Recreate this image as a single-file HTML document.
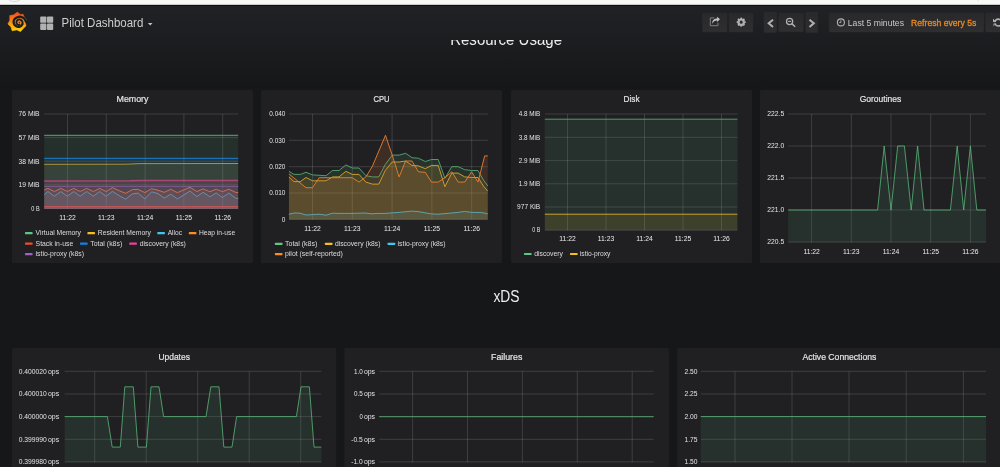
<!DOCTYPE html>
<html><head><meta charset="utf-8"><title>Pilot Dashboard</title>
<style>
html,body{margin:0;padding:0;background:#161719;overflow:hidden;}
svg{display:block;font-family:'Liberation Sans', sans-serif;filter:blur(0.35px);}
</style></head><body>
<svg width="1000" height="467" viewBox="0 0 1000 467">
<defs>
<linearGradient id="pg" x1="0" y1="0" x2="0" y2="1"><stop offset="0" stop-color="#202225"/><stop offset="1" stop-color="#161719"/></linearGradient>
<linearGradient id="lg" x1="0" y1="0" x2="0" y2="1"><stop offset="0" stop-color="#f44d1c"/><stop offset="0.5" stop-color="#fa8a12"/><stop offset="1" stop-color="#ffd80a"/></linearGradient>
<linearGradient id="bt" x1="0" y1="0" x2="0" y2="1"><stop offset="0" stop-color="#29292c"/><stop offset="1" stop-color="#2e2e31"/></linearGradient>
</defs>
<rect width="1000" height="467" fill="#161719"/>
<rect y="5" width="1000" height="80" fill="url(#pg)"/>

<clipPath id="cl"><rect x="0" y="40.0" width="1000" height="20"/></clipPath>
<text x="450.2" y="44.5" font-size="15.6" textLength="111.8" lengthAdjust="spacingAndGlyphs" fill="#eeeeee" clip-path="url(#cl)">Resource Usage</text>
<text x="493.4" y="302.1" font-size="15.6" textLength="26.2" lengthAdjust="spacingAndGlyphs" fill="#eeeeee">xDS</text>
<rect y="-2" width="1000" height="6.9" fill="#f8f8f6"/>
<rect y="4.9" width="1000" height="1.0" fill="#0e0f11"/>
<rect x="977.6" y="0" width="0.9" height="1.7" fill="#e2e2e2"/>
<ellipse cx="14.5" cy="-2" rx="6" ry="3.6" fill="none" stroke="#dcdcdc" stroke-width="1.2"/>
<path d="M17.35,12.1 L20.3,14.4 L23.1,14.2 L24.0,16.5 L26.2,19.4 L25.4,22.6 L26.0,25.9 L23.6,28.2 L20.6,31.6 L16.7,29.9 L12.1,30.8 L11.0,27.1 L7.9,23.9 L9.8,20.2 L9.7,15.6 L13.7,14.8 Z" fill="url(#lg)" stroke="url(#lg)" stroke-width="0.5" stroke-linejoin="round"/>
<path d="M26.60,22.40 C26.43,22.17 25.89,21.50 25.60,21.00 C25.31,20.50 25.27,19.95 24.85,19.40 C24.43,18.85 23.74,18.12 23.10,17.70 C22.46,17.27 21.71,17.00 21.00,16.85 C20.29,16.70 19.63,16.66 18.85,16.80 C18.07,16.94 17.05,17.27 16.30,17.70 C15.55,18.13 14.80,18.72 14.35,19.40 C13.90,20.08 13.64,21.05 13.60,21.80 C13.56,22.55 13.80,23.27 14.10,23.90 C14.40,24.53 14.86,25.15 15.40,25.60 C15.94,26.05 16.70,26.40 17.35,26.60 C18.00,26.80 18.66,26.93 19.30,26.80 C19.94,26.68 20.68,26.30 21.20,25.85 C21.72,25.40 22.20,24.39 22.40,24.10" fill="none" stroke="#1d1e21" stroke-width="2.3" stroke-linecap="round"/>
<path d="M22.40,24.10 C22.43,23.85 22.65,23.10 22.60,22.60 C22.55,22.10 22.37,21.52 22.10,21.10 C21.83,20.68 21.43,20.38 21.00,20.10 C20.57,19.82 20.00,19.45 19.50,19.40 C19.00,19.35 18.45,19.55 18.00,19.80 C17.55,20.05 17.07,20.47 16.80,20.90 C16.53,21.33 16.38,21.90 16.40,22.40 C16.42,22.90 16.60,23.48 16.90,23.90 C17.20,24.32 17.75,24.75 18.20,24.90 C18.65,25.05 19.37,24.82 19.60,24.80" fill="none" stroke="#1d1e21" stroke-width="1.9" stroke-linecap="round"/>
<circle cx="19.4" cy="22.6" r="0.9" fill="#1d1e21" fill-opacity="0.85"/>
<rect x="40.2" y="16.4" width="6.2" height="6.4" rx="0.9" fill="#b2b2b3"/>
<rect x="47.0" y="16.4" width="6.2" height="6.4" rx="0.9" fill="#b2b2b3"/>
<rect x="40.2" y="23.5" width="6.2" height="6.4" rx="0.9" fill="#b2b2b3"/>
<rect x="47.0" y="23.5" width="6.2" height="6.4" rx="0.9" fill="#b2b2b3"/>
<text x="61.6" y="26.7" font-size="12.4" textLength="81.7" lengthAdjust="spacingAndGlyphs" fill="#cdcdce">Pilot Dashboard</text>
<path d="M147.9,22.9 L152.5,22.9 L150.2,25.5 Z" fill="#c8c8c9"/>
<rect x="702.4" y="13.2" width="24.600000000000023" height="18.8" rx="0.8" fill="url(#bt)" stroke="#2f2f32" stroke-width="0.5"/>
<rect x="729.1" y="13.2" width="23.799999999999955" height="18.8" rx="0.8" fill="url(#bt)" stroke="#2f2f32" stroke-width="0.5"/>
<rect x="764" y="12.3" width="12.600000000000023" height="20.3" rx="0.8" fill="url(#bt)" stroke="#2f2f32" stroke-width="0.5"/>
<rect x="778.7" y="13.3" width="24.699999999999932" height="18.4" rx="0.8" fill="url(#bt)" stroke="#2f2f32" stroke-width="0.5"/>
<rect x="805.7" y="12.3" width="12.0" height="20.3" rx="0.8" fill="url(#bt)" stroke="#2f2f32" stroke-width="0.5"/>
<rect x="829.2" y="13.1" width="154.5999999999999" height="18.799999999999997" rx="0.8" fill="url(#bt)" stroke="#2f2f32" stroke-width="0.5"/>
<rect x="985.6" y="13.1" width="18.399999999999977" height="18.799999999999997" rx="0.8" fill="url(#bt)" stroke="#2f2f32" stroke-width="0.5"/>
<path d="M714.4,17.9 H710.3 V25.7 H718 V22.8" fill="none" stroke="#858587" stroke-width="0.95"/>
<path d="M712.2,23.8 C712.0,20.4 713.9,18.5 717.0,18.4 V16.7 L720,19.3 L717.0,21.9 V20.4 C714.8,20.4 713.4,21.4 712.2,23.8 Z" fill="#c2c2c3"/>
<g transform="translate(741.2,22.15)"><circle r="2.65" fill="none" stroke="#b0b0b1" stroke-width="2.2"/><rect x="-0.85" y="-4.5" width="1.7" height="1.6" fill="#b0b0b1" transform="rotate(0)"/><rect x="-0.85" y="-4.5" width="1.7" height="1.6" fill="#b0b0b1" transform="rotate(45)"/><rect x="-0.85" y="-4.5" width="1.7" height="1.6" fill="#b0b0b1" transform="rotate(90)"/><rect x="-0.85" y="-4.5" width="1.7" height="1.6" fill="#b0b0b1" transform="rotate(135)"/><rect x="-0.85" y="-4.5" width="1.7" height="1.6" fill="#b0b0b1" transform="rotate(180)"/><rect x="-0.85" y="-4.5" width="1.7" height="1.6" fill="#b0b0b1" transform="rotate(225)"/><rect x="-0.85" y="-4.5" width="1.7" height="1.6" fill="#b0b0b1" transform="rotate(270)"/><rect x="-0.85" y="-4.5" width="1.7" height="1.6" fill="#b0b0b1" transform="rotate(315)"/></g>
<path d="M773.0,19.7 L768.7,23.3 L773.0,26.9" fill="none" stroke="#b0b0b1" stroke-width="2.0"/>
<path d="M809.5,19.7 L813.8,23.3 L809.5,26.9" fill="none" stroke="#b0b0b1" stroke-width="2.0"/>
<g fill="none" stroke="#b0b0b1"><circle cx="789.6" cy="21.4" r="3.1" stroke-width="1.25"/><path d="M792.0,23.9 L795.2,26.7" stroke-width="1.5"/><path d="M788.0,21.4 H791.2" stroke-width="1"/></g>
<g fill="none" stroke="#b0b0b1"><circle cx="840.9" cy="22.4" r="3.5" stroke-width="1.1"/><path d="M840.9,20.2 V22.6 H839.2" stroke-width="0.9"/></g>
<text x="847.8" y="26" font-size="9.1" textLength="56.2" lengthAdjust="spacingAndGlyphs" fill="#c9c9ca">Last 5 minutes</text>
<text x="911.1" y="26" font-size="9.1" textLength="65.2" lengthAdjust="spacingAndGlyphs" fill="#ee8c1c" stroke="#ee8c1c" stroke-width="0.3">Refresh every 5s</text>
<circle cx="998.3" cy="22.6" r="3.4" fill="none" stroke="#b0b0b1" stroke-width="1.7"/>
<rect x="992" y="22.1" width="5" height="1.3" fill="#2c2c2f"/>
<path d="M993,18.6 V22 H996.2 Z" fill="#b0b0b1"/>
<path d="M993.2,23.5 H996.4 L993.2,26.6 Z" fill="#b0b0b1" fill-opacity="0.6"/>
<rect x="12" y="90" width="241" height="173.0" rx="1.6" fill="#202023"/>
<text x="132.5" y="101.5" font-size="9.4" text-anchor="middle" textLength="32" lengthAdjust="spacingAndGlyphs" fill="#e4e4e5" stroke="#e4e4e5" stroke-width="0.2">Memory</text>
<line x1="44.2" x2="238.2" y1="114" y2="114" stroke="rgba(215,215,220,0.16)" stroke-width="1"/>
<line x1="44.2" x2="238.2" y1="137.6" y2="137.6" stroke="rgba(215,215,220,0.16)" stroke-width="1"/>
<line x1="44.2" x2="238.2" y1="161.2" y2="161.2" stroke="rgba(215,215,220,0.16)" stroke-width="1"/>
<line x1="44.2" x2="238.2" y1="184.9" y2="184.9" stroke="rgba(215,215,220,0.16)" stroke-width="1"/>
<line x1="44.2" x2="238.2" y1="208.5" y2="208.5" stroke="rgba(215,215,220,0.16)" stroke-width="1"/>
<line x1="67.5" x2="67.5" y1="114" y2="209" stroke="rgba(215,215,220,0.16)" stroke-width="1"/>
<line x1="106.3" x2="106.3" y1="114" y2="209" stroke="rgba(215,215,220,0.16)" stroke-width="1"/>
<line x1="145.1" x2="145.1" y1="114" y2="209" stroke="rgba(215,215,220,0.16)" stroke-width="1"/>
<line x1="183.9" x2="183.9" y1="114" y2="209" stroke="rgba(215,215,220,0.16)" stroke-width="1"/>
<line x1="222.7" x2="222.7" y1="114" y2="209" stroke="rgba(215,215,220,0.16)" stroke-width="1"/>
<polygon points="44.2,135.3 238.2,135.3 238.2,209.0 44.2,209.0" fill="#5ab87a" fill-opacity="0.1"/>
<polyline points="44.2,135.3 238.2,135.3" fill="none" stroke="#5ab87a" stroke-width="1.0" stroke-opacity="0.9" stroke-linejoin="round"/>
<polygon points="44.2,164.3 125.0,164.2 140.0,163.6 238.2,163.5 238.2,209.0 44.2,209.0" fill="#e8b62c" fill-opacity="0.1"/>
<polyline points="44.2,164.3 125.0,164.2 140.0,163.6 238.2,163.5" fill="none" stroke="#e8b62c" stroke-width="1.0" stroke-opacity="0.75" stroke-linejoin="round"/>
<polygon points="44.2,194.7 47.9,191.5 54.4,196.2 60.8,191.5 67.4,196.2 73.6,191.5 80.2,196.2 86.7,191.5 93.3,196.2 99.6,191.5 106.2,196.2 112.4,191.3 119.0,195.6 125.6,199.2 132.4,193.9 138.2,193.1 144.8,198.9 151.6,191.8 158.0,193.6 164.2,198.1 170.8,194.2 177.4,198.9 190.0,191.0 196.8,196.6 203.1,192.3 209.9,196.8 216.2,192.9 222.5,197.5 228.8,193.1 235.6,198.1 238.2,198.4 238.2,209.0 44.2,209.0" fill="#45c0e6" fill-opacity="0.13"/>
<polyline points="44.2,194.7 47.9,191.5 54.4,196.2 60.8,191.5 67.4,196.2 73.6,191.5 80.2,196.2 86.7,191.5 93.3,196.2 99.6,191.5 106.2,196.2 112.4,191.3 119.0,195.6 125.6,199.2 132.4,193.9 138.2,193.1 144.8,198.9 151.6,191.8 158.0,193.6 164.2,198.1 170.8,194.2 177.4,198.9 190.0,191.0 196.8,196.6 203.1,192.3 209.9,196.8 216.2,192.9 222.5,197.5 228.8,193.1 235.6,198.1 238.2,198.4" fill="none" stroke="#45c0e6" stroke-width="1.0" stroke-opacity="0.8" stroke-linejoin="round"/>
<polygon points="44.2,190.0 47.9,188.4 54.4,191.5 60.8,188.4 67.4,191.5 73.6,188.4 80.2,191.5 86.7,188.4 93.3,191.5 99.6,188.4 106.2,191.5 112.4,187.6 119.0,190.6 125.6,193.3 132.4,189.6 138.2,189.4 144.8,192.6 151.6,188.7 158.0,190.3 164.2,192.3 170.8,189.4 177.4,192.6 190.0,187.3 196.8,191.5 203.1,188.9 209.9,191.7 216.2,189.2 222.5,191.7 228.8,189.2 235.6,192.4 238.2,192.6 238.2,209.0 44.2,209.0" fill="#f08030" fill-opacity="0.13"/>
<polyline points="44.2,190.0 47.9,188.4 54.4,191.5 60.8,188.4 67.4,191.5 73.6,188.4 80.2,191.5 86.7,188.4 93.3,191.5 99.6,188.4 106.2,191.5 112.4,187.6 119.0,190.6 125.6,193.3 132.4,189.6 138.2,189.4 144.8,192.6 151.6,188.7 158.0,190.3 164.2,192.3 170.8,189.4 177.4,192.6 190.0,187.3 196.8,191.5 203.1,188.9 209.9,191.7 216.2,189.2 222.5,191.7 228.8,189.2 235.6,192.4 238.2,192.6" fill="none" stroke="#f08030" stroke-width="1.0" stroke-opacity="0.9" stroke-linejoin="round"/>
<polygon points="44.2,206.8 238.2,206.8 238.2,209.0 44.2,209.0" fill="#e8512c" fill-opacity="0.13"/>
<polyline points="44.2,206.8 238.2,206.8" fill="none" stroke="#e8512c" stroke-width="1.4" stroke-opacity="0.85" stroke-linejoin="round"/>
<polygon points="44.2,158.4 238.2,158.4 238.2,209.0 44.2,209.0" fill="#1a7fd8" fill-opacity="0.1"/>
<polyline points="44.2,158.4 238.2,158.4" fill="none" stroke="#1a7fd8" stroke-width="1.2" stroke-opacity="0.8" stroke-linejoin="round"/>
<polygon points="44.2,180.9 130.0,180.8 142.0,180.5 238.2,180.5 238.2,209.0 44.2,209.0" fill="#d8468f" fill-opacity="0.13"/>
<polyline points="44.2,180.9 130.0,180.8 142.0,180.5 238.2,180.5" fill="none" stroke="#d8468f" stroke-width="1.5" stroke-opacity="0.72" stroke-linejoin="round"/>
<polygon points="44.2,186.4 238.2,186.4 238.2,209.0 44.2,209.0" fill="#8f62b4" fill-opacity="0.13"/>
<polyline points="44.2,186.4 238.2,186.4" fill="none" stroke="#8f62b4" stroke-width="1.0" stroke-opacity="0.7" stroke-linejoin="round"/>
<text x="39.6" y="115.8" font-size="7" text-anchor="end" textLength="21" lengthAdjust="spacingAndGlyphs" fill="#e4e4e5">76 MiB</text>
<text x="39.6" y="139.9" font-size="7" text-anchor="end" textLength="21" lengthAdjust="spacingAndGlyphs" fill="#e4e4e5">57 MiB</text>
<text x="39.6" y="163.5" font-size="7" text-anchor="end" textLength="21" lengthAdjust="spacingAndGlyphs" fill="#e4e4e5">38 MiB</text>
<text x="39.6" y="187.20000000000002" font-size="7" text-anchor="end" textLength="21" lengthAdjust="spacingAndGlyphs" fill="#e4e4e5">19 MiB</text>
<text x="39.6" y="210.8" font-size="7" text-anchor="end" textLength="8.3" lengthAdjust="spacingAndGlyphs" fill="#e4e4e5">0 B</text>
<text x="67.5" y="220" font-size="7" text-anchor="middle" textLength="16.4" lengthAdjust="spacingAndGlyphs" fill="#ededee">11:22</text>
<text x="106.3" y="220" font-size="7" text-anchor="middle" textLength="16.4" lengthAdjust="spacingAndGlyphs" fill="#ededee">11:23</text>
<text x="145.1" y="220" font-size="7" text-anchor="middle" textLength="16.4" lengthAdjust="spacingAndGlyphs" fill="#ededee">11:24</text>
<text x="183.9" y="220" font-size="7" text-anchor="middle" textLength="16.4" lengthAdjust="spacingAndGlyphs" fill="#ededee">11:25</text>
<text x="222.7" y="220" font-size="7" text-anchor="middle" textLength="16.4" lengthAdjust="spacingAndGlyphs" fill="#ededee">11:26</text>
<rect x="25" y="232.1" width="7.6" height="2.2" rx="0.6" fill="#5cc880"/>
<text x="35.6" y="235.1" font-size="7.3" textLength="45.4" lengthAdjust="spacingAndGlyphs" fill="#dcdcdd">Virtual Memory</text>
<rect x="87.4" y="232.1" width="7.6" height="2.2" rx="0.6" fill="#f4be20"/>
<text x="97.8" y="235.1" font-size="7.3" textLength="53" lengthAdjust="spacingAndGlyphs" fill="#dcdcdd">Resident Memory</text>
<rect x="157.3" y="232.1" width="7.6" height="2.2" rx="0.6" fill="#3ec8f0"/>
<text x="167.7" y="235.1" font-size="7.3" textLength="14.3" lengthAdjust="spacingAndGlyphs" fill="#dcdcdd">Alloc</text>
<rect x="188.8" y="232.1" width="7.6" height="2.2" rx="0.6" fill="#ff8c1e"/>
<text x="198.9" y="235.1" font-size="7.3" textLength="36.3" lengthAdjust="spacingAndGlyphs" fill="#dcdcdd">Heap in-use</text>
<rect x="25" y="242.6" width="7.6" height="2.2" rx="0.6" fill="#f24c20"/>
<text x="35.6" y="245.6" font-size="7.3" textLength="37.6" lengthAdjust="spacingAndGlyphs" fill="#dcdcdd">Stack in-use</text>
<rect x="80" y="242.6" width="7.6" height="2.2" rx="0.6" fill="#1082e8"/>
<text x="90.3" y="245.6" font-size="7.3" textLength="31.9" lengthAdjust="spacingAndGlyphs" fill="#dcdcdd">Total (k8s)</text>
<rect x="129.3" y="242.6" width="7.6" height="2.2" rx="0.6" fill="#ec4099"/>
<text x="139.7" y="245.6" font-size="7.3" textLength="46.2" lengthAdjust="spacingAndGlyphs" fill="#dcdcdd">discovery (k8s)</text>
<rect x="25" y="253.1" width="7.6" height="2.2" rx="0.6" fill="#9c62c4"/>
<text x="35.6" y="256.09999999999997" font-size="7.3" textLength="48.4" lengthAdjust="spacingAndGlyphs" fill="#dcdcdd">istio-proxy (k8s)</text>
<rect x="261" y="90" width="241" height="173.0" rx="1.6" fill="#202023"/>
<text x="381.5" y="101.5" font-size="9.4" text-anchor="middle" textLength="16.1" lengthAdjust="spacingAndGlyphs" fill="#e4e4e5" stroke="#e4e4e5" stroke-width="0.2">CPU</text>
<line x1="289" x2="487.8" y1="114" y2="114" stroke="rgba(215,215,220,0.16)" stroke-width="1"/>
<line x1="289" x2="487.8" y1="140.3" y2="140.3" stroke="rgba(215,215,220,0.16)" stroke-width="1"/>
<line x1="289" x2="487.8" y1="166.7" y2="166.7" stroke="rgba(215,215,220,0.16)" stroke-width="1"/>
<line x1="289" x2="487.8" y1="193" y2="193" stroke="rgba(215,215,220,0.16)" stroke-width="1"/>
<line x1="289" x2="487.8" y1="219.3" y2="219.3" stroke="rgba(215,215,220,0.16)" stroke-width="1"/>
<line x1="312.5" x2="312.5" y1="114" y2="219.6" stroke="rgba(215,215,220,0.16)" stroke-width="1"/>
<line x1="352.3" x2="352.3" y1="114" y2="219.6" stroke="rgba(215,215,220,0.16)" stroke-width="1"/>
<line x1="392.1" x2="392.1" y1="114" y2="219.6" stroke="rgba(215,215,220,0.16)" stroke-width="1"/>
<line x1="431.9" x2="431.9" y1="114" y2="219.6" stroke="rgba(215,215,220,0.16)" stroke-width="1"/>
<line x1="471.7" x2="471.7" y1="114" y2="219.6" stroke="rgba(215,215,220,0.16)" stroke-width="1"/>
<polygon points="288.9,171.3 294.0,174.4 300.4,174.4 306.0,172.3 312.5,174.9 326.1,175.7 332.5,170.5 339.0,170.5 345.9,164.9 352.3,168.0 359.0,168.0 365.9,175.7 372.4,176.9 378.8,176.9 385.2,164.6 392.2,155.1 399.1,155.1 405.6,153.3 412.0,157.7 418.4,158.2 425.3,161.5 431.5,159.5 438.2,159.5 444.9,178.2 451.8,166.7 458.2,166.7 464.7,169.7 471.6,170.5 478.0,170.5 483.9,180.8 487.8,185.9 487.8,219.6 288.9,219.6" fill="#5ab87a" fill-opacity="0.12"/>
<polyline points="288.9,171.3 294.0,174.4 300.4,174.4 306.0,172.3 312.5,174.9 326.1,175.7 332.5,170.5 339.0,170.5 345.9,164.9 352.3,168.0 359.0,168.0 365.9,175.7 372.4,176.9 378.8,176.9 385.2,164.6 392.2,155.1 399.1,155.1 405.6,153.3 412.0,157.7 418.4,158.2 425.3,161.5 431.5,159.5 438.2,159.5 444.9,178.2 451.8,166.7 458.2,166.7 464.7,169.7 471.6,170.5 478.0,170.5 483.9,180.8 487.8,185.9" fill="none" stroke="#5ab87a" stroke-width="0.95" stroke-opacity="0.85" stroke-linejoin="round"/>
<polygon points="288.9,176.9 294.0,181.6 300.4,181.6 306.0,177.5 312.5,180.8 326.1,180.8 332.5,176.9 339.0,176.9 345.9,171.3 352.3,174.4 359.0,174.4 365.9,182.1 372.4,184.1 378.8,184.1 385.2,170.5 392.2,162.0 399.1,162.0 405.6,161.0 412.0,165.4 418.4,165.9 425.3,168.7 431.5,165.4 438.2,165.4 444.9,186.7 451.8,173.1 458.2,173.1 464.7,176.9 471.6,177.5 478.0,177.5 483.9,186.7 487.8,191.1 487.8,219.6 288.9,219.6" fill="#e8b62c" fill-opacity="0.14"/>
<polyline points="288.9,176.9 294.0,181.6 300.4,181.6 306.0,177.5 312.5,180.8 326.1,180.8 332.5,176.9 339.0,176.9 345.9,171.3 352.3,174.4 359.0,174.4 365.9,182.1 372.4,184.1 378.8,184.1 385.2,170.5 392.2,162.0 399.1,162.0 405.6,161.0 412.0,165.4 418.4,165.9 425.3,168.7 431.5,165.4 438.2,165.4 444.9,186.7 451.8,173.1 458.2,173.1 464.7,176.9 471.6,177.5 478.0,177.5 483.9,186.7 487.8,191.1" fill="none" stroke="#e8b62c" stroke-width="0.95" stroke-opacity="0.85" stroke-linejoin="round"/>
<polygon points="288.9,214.2 295.0,212.9 300.0,213.2 306.0,215.0 312.5,214.6 319.0,214.2 326.0,215.2 332.5,213.2 339.0,213.4 352.0,213.4 365.0,213.0 372.0,213.8 378.0,213.4 385.0,213.4 399.0,212.4 412.0,211.1 418.4,211.6 425.0,212.8 431.5,213.9 438.0,214.2 445.0,213.6 458.0,212.4 464.7,211.4 471.6,212.4 478.0,212.4 484.0,212.9 487.8,213.9 487.8,219.6 288.9,219.6" fill="#45c0e6" fill-opacity="0.12"/>
<polyline points="288.9,214.2 295.0,212.9 300.0,213.2 306.0,215.0 312.5,214.6 319.0,214.2 326.0,215.2 332.5,213.2 339.0,213.4 352.0,213.4 365.0,213.0 372.0,213.8 378.0,213.4 385.0,213.4 399.0,212.4 412.0,211.1 418.4,211.6 425.0,212.8 431.5,213.9 438.0,214.2 445.0,213.6 458.0,212.4 464.7,211.4 471.6,212.4 478.0,212.4 484.0,212.9 487.8,213.9" fill="none" stroke="#45c0e6" stroke-width="0.95" stroke-opacity="0.85" stroke-linejoin="round"/>
<polygon points="288.9,173.9 306.0,187.7 312.5,187.7 319.2,177.7 352.3,177.7 359.0,182.1 365.9,176.9 372.4,166.2 385.5,135.3 392.2,155.1 399.1,176.9 405.6,161.0 412.0,161.0 418.4,171.8 425.3,172.3 431.5,182.1 438.2,182.1 444.9,177.7 451.8,171.8 458.2,182.1 464.7,182.1 471.6,171.8 478.0,182.1 484.7,155.9 487.8,155.9 487.8,219.6 288.9,219.6" fill="#f08030" fill-opacity="0.14"/>
<polyline points="288.9,173.9 306.0,187.7 312.5,187.7 319.2,177.7 352.3,177.7 359.0,182.1 365.9,176.9 372.4,166.2 385.5,135.3 392.2,155.1 399.1,176.9 405.6,161.0 412.0,161.0 418.4,171.8 425.3,172.3 431.5,182.1 438.2,182.1 444.9,177.7 451.8,171.8 458.2,182.1 464.7,182.1 471.6,171.8 478.0,182.1 484.7,155.9 487.8,155.9" fill="none" stroke="#f08030" stroke-width="0.95" stroke-opacity="0.92" stroke-linejoin="round"/>
<text x="285.4" y="115.8" font-size="7" text-anchor="end" textLength="16.1" lengthAdjust="spacingAndGlyphs" fill="#e4e4e5">0.040</text>
<text x="285.4" y="142.60000000000002" font-size="7" text-anchor="end" textLength="16.1" lengthAdjust="spacingAndGlyphs" fill="#e4e4e5">0.030</text>
<text x="285.4" y="169.0" font-size="7" text-anchor="end" textLength="16.1" lengthAdjust="spacingAndGlyphs" fill="#e4e4e5">0.020</text>
<text x="285.4" y="195.3" font-size="7" text-anchor="end" textLength="16.1" lengthAdjust="spacingAndGlyphs" fill="#e4e4e5">0.010</text>
<text x="285.4" y="221.60000000000002" font-size="7" text-anchor="end" textLength="3.6" lengthAdjust="spacingAndGlyphs" fill="#e4e4e5">0</text>
<text x="312.5" y="230.6" font-size="7" text-anchor="middle" textLength="16.4" lengthAdjust="spacingAndGlyphs" fill="#ededee">11:22</text>
<text x="352.3" y="230.6" font-size="7" text-anchor="middle" textLength="16.4" lengthAdjust="spacingAndGlyphs" fill="#ededee">11:23</text>
<text x="392.1" y="230.6" font-size="7" text-anchor="middle" textLength="16.4" lengthAdjust="spacingAndGlyphs" fill="#ededee">11:24</text>
<text x="431.9" y="230.6" font-size="7" text-anchor="middle" textLength="16.4" lengthAdjust="spacingAndGlyphs" fill="#ededee">11:25</text>
<text x="471.7" y="230.6" font-size="7" text-anchor="middle" textLength="16.4" lengthAdjust="spacingAndGlyphs" fill="#ededee">11:26</text>
<rect x="274.9" y="242.70000000000002" width="7.6" height="2.2" rx="0.6" fill="#5cc880"/>
<text x="285" y="245.70000000000002" font-size="7.3" textLength="32.3" lengthAdjust="spacingAndGlyphs" fill="#dcdcdd">Total (k8s)</text>
<rect x="324.9" y="242.70000000000002" width="7.6" height="2.2" rx="0.6" fill="#f4be20"/>
<text x="334.9" y="245.70000000000002" font-size="7.3" textLength="45.6" lengthAdjust="spacingAndGlyphs" fill="#dcdcdd">discovery (k8s)</text>
<rect x="387.6" y="242.70000000000002" width="7.6" height="2.2" rx="0.6" fill="#3ec8f0"/>
<text x="397.6" y="245.70000000000002" font-size="7.3" textLength="47.9" lengthAdjust="spacingAndGlyphs" fill="#dcdcdd">istio-proxy (k8s)</text>
<rect x="274.9" y="253.0" width="7.6" height="2.2" rx="0.6" fill="#ff8c1e"/>
<text x="285" y="256.0" font-size="7.3" textLength="57.9" lengthAdjust="spacingAndGlyphs" fill="#dcdcdd">pilot (self-reported)</text>
<rect x="511" y="90" width="241" height="173.0" rx="1.6" fill="#202023"/>
<text x="631.5" y="101.5" font-size="9.4" text-anchor="middle" textLength="16" lengthAdjust="spacingAndGlyphs" fill="#e4e4e5" stroke="#e4e4e5" stroke-width="0.2">Disk</text>
<line x1="544.8" x2="737.4" y1="114" y2="114" stroke="rgba(215,215,220,0.16)" stroke-width="1"/>
<line x1="544.8" x2="737.4" y1="137.3" y2="137.3" stroke="rgba(215,215,220,0.16)" stroke-width="1"/>
<line x1="544.8" x2="737.4" y1="160.6" y2="160.6" stroke="rgba(215,215,220,0.16)" stroke-width="1"/>
<line x1="544.8" x2="737.4" y1="183.8" y2="183.8" stroke="rgba(215,215,220,0.16)" stroke-width="1"/>
<line x1="544.8" x2="737.4" y1="207.0" y2="207.0" stroke="rgba(215,215,220,0.16)" stroke-width="1"/>
<line x1="544.8" x2="737.4" y1="230.2" y2="230.2" stroke="rgba(215,215,220,0.16)" stroke-width="1"/>
<line x1="567.5" x2="567.5" y1="114" y2="230.3" stroke="rgba(215,215,220,0.16)" stroke-width="1"/>
<line x1="606" x2="606" y1="114" y2="230.3" stroke="rgba(215,215,220,0.16)" stroke-width="1"/>
<line x1="644.5" x2="644.5" y1="114" y2="230.3" stroke="rgba(215,215,220,0.16)" stroke-width="1"/>
<line x1="683" x2="683" y1="114" y2="230.3" stroke="rgba(215,215,220,0.16)" stroke-width="1"/>
<line x1="721.5" x2="721.5" y1="114" y2="230.3" stroke="rgba(215,215,220,0.16)" stroke-width="1"/>
<polygon points="544.8,119.2 737.4,119.2 737.4,230.3 544.8,230.3" fill="#5ab87a" fill-opacity="0.11"/>
<polyline points="544.8,119.2 737.4,119.2" fill="none" stroke="#5ab87a" stroke-width="1.0" stroke-opacity="0.8" stroke-linejoin="round"/>
<polygon points="544.8,214.2 737.4,214.2 737.4,230.3 544.8,230.3" fill="#e8b62c" fill-opacity="0.12"/>
<polyline points="544.8,214.2 737.4,214.2" fill="none" stroke="#e8b62c" stroke-width="1.0" stroke-opacity="0.85" stroke-linejoin="round"/>
<text x="540.2" y="115.8" font-size="7" text-anchor="end" textLength="21.4" lengthAdjust="spacingAndGlyphs" fill="#e4e4e5">4.8 MiB</text>
<text x="540.2" y="139.5" font-size="7" text-anchor="end" textLength="21.4" lengthAdjust="spacingAndGlyphs" fill="#e4e4e5">3.8 MiB</text>
<text x="540.2" y="162.70000000000002" font-size="7" text-anchor="end" textLength="21.4" lengthAdjust="spacingAndGlyphs" fill="#e4e4e5">2.9 MiB</text>
<text x="540.2" y="185.9" font-size="7" text-anchor="end" textLength="21.4" lengthAdjust="spacingAndGlyphs" fill="#e4e4e5">1.9 MiB</text>
<text x="540.2" y="209.10000000000002" font-size="7" text-anchor="end" textLength="23.1" lengthAdjust="spacingAndGlyphs" fill="#e4e4e5">977 KiB</text>
<text x="540.2" y="231.9" font-size="7" text-anchor="end" textLength="8.0" lengthAdjust="spacingAndGlyphs" fill="#e4e4e5">0 B</text>
<text x="567.5" y="241" font-size="7" text-anchor="middle" textLength="16.4" lengthAdjust="spacingAndGlyphs" fill="#ededee">11:22</text>
<text x="606" y="241" font-size="7" text-anchor="middle" textLength="16.4" lengthAdjust="spacingAndGlyphs" fill="#ededee">11:23</text>
<text x="644.5" y="241" font-size="7" text-anchor="middle" textLength="16.4" lengthAdjust="spacingAndGlyphs" fill="#ededee">11:24</text>
<text x="683" y="241" font-size="7" text-anchor="middle" textLength="16.4" lengthAdjust="spacingAndGlyphs" fill="#ededee">11:25</text>
<text x="721.5" y="241" font-size="7" text-anchor="middle" textLength="16.4" lengthAdjust="spacingAndGlyphs" fill="#ededee">11:26</text>
<rect x="524" y="252.9" width="7.6" height="2.2" rx="0.6" fill="#5cc880"/>
<text x="534.2" y="255.9" font-size="7.3" textLength="28.8" lengthAdjust="spacingAndGlyphs" fill="#dcdcdd">discovery</text>
<rect x="570" y="252.9" width="7.6" height="2.2" rx="0.6" fill="#f4be20"/>
<text x="579.8" y="255.9" font-size="7.3" textLength="30.6" lengthAdjust="spacingAndGlyphs" fill="#dcdcdd">istio-proxy</text>
<rect x="760" y="90" width="241" height="173.0" rx="1.6" fill="#202023"/>
<text x="880.5" y="101.5" font-size="9.4" text-anchor="middle" textLength="41.6" lengthAdjust="spacingAndGlyphs" fill="#e4e4e5" stroke="#e4e4e5" stroke-width="0.2">Goroutines</text>
<line x1="788.2" x2="986" y1="114" y2="114" stroke="rgba(215,215,220,0.16)" stroke-width="1"/>
<line x1="788.2" x2="986" y1="146" y2="146" stroke="rgba(215,215,220,0.16)" stroke-width="1"/>
<line x1="788.2" x2="986" y1="178" y2="178" stroke="rgba(215,215,220,0.16)" stroke-width="1"/>
<line x1="788.2" x2="986" y1="210" y2="210" stroke="rgba(215,215,220,0.16)" stroke-width="1"/>
<line x1="788.2" x2="986" y1="242" y2="242" stroke="rgba(215,215,220,0.16)" stroke-width="1"/>
<line x1="811.6" x2="811.6" y1="114" y2="242.6" stroke="rgba(215,215,220,0.16)" stroke-width="1"/>
<line x1="851.3" x2="851.3" y1="114" y2="242.6" stroke="rgba(215,215,220,0.16)" stroke-width="1"/>
<line x1="891.0" x2="891.0" y1="114" y2="242.6" stroke="rgba(215,215,220,0.16)" stroke-width="1"/>
<line x1="930.7" x2="930.7" y1="114" y2="242.6" stroke="rgba(215,215,220,0.16)" stroke-width="1"/>
<line x1="970.4" x2="970.4" y1="114" y2="242.6" stroke="rgba(215,215,220,0.16)" stroke-width="1"/>
<polygon points="788.2,210.0 877.6,210.0 884.2,146.0 891.0,210.0 897.7,146.0 904.4,146.0 911.2,210.0 917.6,146.0 924.0,210.0 950.4,210.0 957.2,146.0 963.7,210.0 970.4,146.0 976.8,210.0 986.0,210.0 986.0,242.6 788.2,242.6" fill="#5ab87a" fill-opacity="0.11"/>
<polyline points="788.2,210.0 877.6,210.0 884.2,146.0 891.0,210.0 897.7,146.0 904.4,146.0 911.2,210.0 917.6,146.0 924.0,210.0 950.4,210.0 957.2,146.0 963.7,210.0 970.4,146.0 976.8,210.0 986.0,210.0" fill="none" stroke="#5ab87a" stroke-width="1.0" stroke-opacity="0.78" stroke-linejoin="round"/>
<text x="784.2" y="115.8" font-size="7" text-anchor="end" textLength="16.9" lengthAdjust="spacingAndGlyphs" fill="#e4e4e5">222.5</text>
<text x="784.2" y="148.3" font-size="7" text-anchor="end" textLength="16.9" lengthAdjust="spacingAndGlyphs" fill="#e4e4e5">222.0</text>
<text x="784.2" y="180.3" font-size="7" text-anchor="end" textLength="16.9" lengthAdjust="spacingAndGlyphs" fill="#e4e4e5">221.5</text>
<text x="784.2" y="212.3" font-size="7" text-anchor="end" textLength="16.9" lengthAdjust="spacingAndGlyphs" fill="#e4e4e5">221.0</text>
<text x="784.2" y="244.3" font-size="7" text-anchor="end" textLength="16.9" lengthAdjust="spacingAndGlyphs" fill="#e4e4e5">220.5</text>
<text x="811.6" y="253.6" font-size="7" text-anchor="middle" textLength="16.4" lengthAdjust="spacingAndGlyphs" fill="#ededee">11:22</text>
<text x="851.3" y="253.6" font-size="7" text-anchor="middle" textLength="16.4" lengthAdjust="spacingAndGlyphs" fill="#ededee">11:23</text>
<text x="891.0" y="253.6" font-size="7" text-anchor="middle" textLength="16.4" lengthAdjust="spacingAndGlyphs" fill="#ededee">11:24</text>
<text x="930.7" y="253.6" font-size="7" text-anchor="middle" textLength="16.4" lengthAdjust="spacingAndGlyphs" fill="#ededee">11:25</text>
<text x="970.4" y="253.6" font-size="7" text-anchor="middle" textLength="16.4" lengthAdjust="spacingAndGlyphs" fill="#ededee">11:26</text>
<rect x="12" y="348" width="324.3" height="130" rx="1.6" fill="#202023"/>
<text x="174.15" y="359.5" font-size="9.4" text-anchor="middle" textLength="31.5" lengthAdjust="spacingAndGlyphs" fill="#e4e4e5" stroke="#e4e4e5" stroke-width="0.2">Updates</text>
<line x1="64.7" x2="321.3" y1="371.3" y2="371.3" stroke="rgba(215,215,220,0.16)" stroke-width="1"/>
<line x1="64.7" x2="321.3" y1="394.0" y2="394.0" stroke="rgba(215,215,220,0.16)" stroke-width="1"/>
<line x1="64.7" x2="321.3" y1="416.6" y2="416.6" stroke="rgba(215,215,220,0.16)" stroke-width="1"/>
<line x1="64.7" x2="321.3" y1="439.3" y2="439.3" stroke="rgba(215,215,220,0.16)" stroke-width="1"/>
<line x1="64.7" x2="321.3" y1="461.9" y2="461.9" stroke="rgba(215,215,220,0.16)" stroke-width="1"/>
<line x1="94.7" x2="94.7" y1="371.3" y2="462.4" stroke="rgba(215,215,220,0.16)" stroke-width="1"/>
<line x1="146.2" x2="146.2" y1="371.3" y2="462.4" stroke="rgba(215,215,220,0.16)" stroke-width="1"/>
<line x1="197.7" x2="197.7" y1="371.3" y2="462.4" stroke="rgba(215,215,220,0.16)" stroke-width="1"/>
<line x1="249.2" x2="249.2" y1="371.3" y2="462.4" stroke="rgba(215,215,220,0.16)" stroke-width="1"/>
<line x1="300.7" x2="300.7" y1="371.3" y2="462.4" stroke="rgba(215,215,220,0.16)" stroke-width="1"/>
<polygon points="64.7,416.6 107.4,416.6 112.2,447.1 120.3,447.1 124.8,386.8 133.3,386.8 137.9,447.1 146.4,447.1 151.0,386.8 159.0,386.8 163.6,416.6 206.0,416.6 210.8,386.8 219.0,386.8 223.8,447.1 232.0,447.1 236.6,416.6 296.4,416.6 301.0,386.8 309.4,386.8 314.0,447.1 321.3,447.1 321.3,462.4 64.7,462.4" fill="#5ab87a" fill-opacity="0.11"/>
<polyline points="64.7,416.6 107.4,416.6 112.2,447.1 120.3,447.1 124.8,386.8 133.3,386.8 137.9,447.1 146.4,447.1 151.0,386.8 159.0,386.8 163.6,416.6 206.0,416.6 210.8,386.8 219.0,386.8 223.8,447.1 232.0,447.1 236.6,416.6 296.4,416.6 301.0,386.8 309.4,386.8 314.0,447.1 321.3,447.1" fill="none" stroke="#5ab87a" stroke-width="1.0" stroke-opacity="0.78" stroke-linejoin="round"/>
<text x="59.2" y="373.6" font-size="7" text-anchor="end" textLength="11.2" lengthAdjust="spacingAndGlyphs" fill="#e4e4e5">ops</text>
<text x="46.800000000000004" y="373.6" font-size="7" text-anchor="end" textLength="28.1" lengthAdjust="spacingAndGlyphs" fill="#e4e4e5">0.400020</text>
<text x="59.2" y="396.3" font-size="7" text-anchor="end" textLength="11.2" lengthAdjust="spacingAndGlyphs" fill="#e4e4e5">ops</text>
<text x="46.800000000000004" y="396.3" font-size="7" text-anchor="end" textLength="28.1" lengthAdjust="spacingAndGlyphs" fill="#e4e4e5">0.400010</text>
<text x="59.2" y="418.90000000000003" font-size="7" text-anchor="end" textLength="11.2" lengthAdjust="spacingAndGlyphs" fill="#e4e4e5">ops</text>
<text x="46.800000000000004" y="418.90000000000003" font-size="7" text-anchor="end" textLength="28.1" lengthAdjust="spacingAndGlyphs" fill="#e4e4e5">0.400000</text>
<text x="59.2" y="441.5" font-size="7" text-anchor="end" textLength="11.2" lengthAdjust="spacingAndGlyphs" fill="#e4e4e5">ops</text>
<text x="46.800000000000004" y="441.5" font-size="7" text-anchor="end" textLength="28.1" lengthAdjust="spacingAndGlyphs" fill="#e4e4e5">0.399990</text>
<text x="59.2" y="463.8" font-size="7" text-anchor="end" textLength="11.2" lengthAdjust="spacingAndGlyphs" fill="#e4e4e5">ops</text>
<text x="46.800000000000004" y="463.8" font-size="7" text-anchor="end" textLength="28.1" lengthAdjust="spacingAndGlyphs" fill="#e4e4e5">0.399980</text>
<rect x="344.4" y="348" width="324.6" height="130" rx="1.6" fill="#202023"/>
<text x="506.7" y="359.5" font-size="9.4" text-anchor="middle" textLength="31.3" lengthAdjust="spacingAndGlyphs" fill="#e4e4e5" stroke="#e4e4e5" stroke-width="0.2">Failures</text>
<line x1="379.2" x2="653.7" y1="371.3" y2="371.3" stroke="rgba(215,215,220,0.16)" stroke-width="1"/>
<line x1="379.2" x2="653.7" y1="394.0" y2="394.0" stroke="rgba(215,215,220,0.16)" stroke-width="1"/>
<line x1="379.2" x2="653.7" y1="416.6" y2="416.6" stroke="rgba(215,215,220,0.16)" stroke-width="1"/>
<line x1="379.2" x2="653.7" y1="439.3" y2="439.3" stroke="rgba(215,215,220,0.16)" stroke-width="1"/>
<line x1="379.2" x2="653.7" y1="461.9" y2="461.9" stroke="rgba(215,215,220,0.16)" stroke-width="1"/>
<line x1="412.6" x2="412.6" y1="371.3" y2="462.4" stroke="rgba(215,215,220,0.16)" stroke-width="1"/>
<line x1="467.5" x2="467.5" y1="371.3" y2="462.4" stroke="rgba(215,215,220,0.16)" stroke-width="1"/>
<line x1="522.4" x2="522.4" y1="371.3" y2="462.4" stroke="rgba(215,215,220,0.16)" stroke-width="1"/>
<line x1="577.3" x2="577.3" y1="371.3" y2="462.4" stroke="rgba(215,215,220,0.16)" stroke-width="1"/>
<line x1="632.2" x2="632.2" y1="371.3" y2="462.4" stroke="rgba(215,215,220,0.16)" stroke-width="1"/>
<polyline points="379.2,416.6 653.7,416.6" fill="none" stroke="#5ab87a" stroke-width="1.3" stroke-opacity="0.62" stroke-linejoin="round"/>
<text x="375.1" y="373.6" font-size="7" text-anchor="end" textLength="11.2" lengthAdjust="spacingAndGlyphs" fill="#e4e4e5">ops</text>
<text x="362.70000000000005" y="373.6" font-size="7" text-anchor="end" textLength="8.799999999999999" lengthAdjust="spacingAndGlyphs" fill="#e4e4e5">1.0</text>
<text x="375.1" y="396.3" font-size="7" text-anchor="end" textLength="11.2" lengthAdjust="spacingAndGlyphs" fill="#e4e4e5">ops</text>
<text x="362.70000000000005" y="396.3" font-size="7" text-anchor="end" textLength="8.799999999999999" lengthAdjust="spacingAndGlyphs" fill="#e4e4e5">0.5</text>
<text x="375.1" y="418.90000000000003" font-size="7" text-anchor="end" textLength="11.2" lengthAdjust="spacingAndGlyphs" fill="#e4e4e5">ops</text>
<text x="362.70000000000005" y="418.90000000000003" font-size="7" text-anchor="end" textLength="3.299999999999999" lengthAdjust="spacingAndGlyphs" fill="#e4e4e5">0</text>
<text x="375.1" y="441.5" font-size="7" text-anchor="end" textLength="11.2" lengthAdjust="spacingAndGlyphs" fill="#e4e4e5">ops</text>
<text x="362.70000000000005" y="441.5" font-size="7" text-anchor="end" textLength="11.499999999999998" lengthAdjust="spacingAndGlyphs" fill="#e4e4e5">-0.5</text>
<text x="375.1" y="463.8" font-size="7" text-anchor="end" textLength="11.2" lengthAdjust="spacingAndGlyphs" fill="#e4e4e5">ops</text>
<text x="362.70000000000005" y="463.8" font-size="7" text-anchor="end" textLength="11.499999999999998" lengthAdjust="spacingAndGlyphs" fill="#e4e4e5">-1.0</text>
<rect x="677.1" y="348" width="324.6" height="130" rx="1.6" fill="#202023"/>
<text x="839.4000000000001" y="359.5" font-size="9.4" text-anchor="middle" textLength="73.8" lengthAdjust="spacingAndGlyphs" fill="#e4e4e5" stroke="#e4e4e5" stroke-width="0.2">Active Connections</text>
<line x1="700.8" x2="986" y1="371.3" y2="371.3" stroke="rgba(215,215,220,0.16)" stroke-width="1"/>
<line x1="700.8" x2="986" y1="394.0" y2="394.0" stroke="rgba(215,215,220,0.16)" stroke-width="1"/>
<line x1="700.8" x2="986" y1="416.6" y2="416.6" stroke="rgba(215,215,220,0.16)" stroke-width="1"/>
<line x1="700.8" x2="986" y1="439.3" y2="439.3" stroke="rgba(215,215,220,0.16)" stroke-width="1"/>
<line x1="700.8" x2="986" y1="461.9" y2="461.9" stroke="rgba(215,215,220,0.16)" stroke-width="1"/>
<line x1="735" x2="735" y1="371.3" y2="462.4" stroke="rgba(215,215,220,0.16)" stroke-width="1"/>
<line x1="792" x2="792" y1="371.3" y2="462.4" stroke="rgba(215,215,220,0.16)" stroke-width="1"/>
<line x1="849" x2="849" y1="371.3" y2="462.4" stroke="rgba(215,215,220,0.16)" stroke-width="1"/>
<line x1="906.2" x2="906.2" y1="371.3" y2="462.4" stroke="rgba(215,215,220,0.16)" stroke-width="1"/>
<line x1="963.4" x2="963.4" y1="371.3" y2="462.4" stroke="rgba(215,215,220,0.16)" stroke-width="1"/>
<polygon points="700.8,416.6 986.0,416.6 986.0,462.4 700.8,462.4" fill="#5ab87a" fill-opacity="0.11"/>
<polyline points="700.8,416.6 986.0,416.6" fill="none" stroke="#5ab87a" stroke-width="1.0" stroke-opacity="0.78" stroke-linejoin="round"/>
<text x="697.5" y="373.6" font-size="7" text-anchor="end" textLength="13" lengthAdjust="spacingAndGlyphs" fill="#e4e4e5">2.50</text>
<text x="697.5" y="396.3" font-size="7" text-anchor="end" textLength="13" lengthAdjust="spacingAndGlyphs" fill="#e4e4e5">2.25</text>
<text x="697.5" y="418.90000000000003" font-size="7" text-anchor="end" textLength="13" lengthAdjust="spacingAndGlyphs" fill="#e4e4e5">2.00</text>
<text x="697.5" y="441.5" font-size="7" text-anchor="end" textLength="13" lengthAdjust="spacingAndGlyphs" fill="#e4e4e5">1.75</text>
<text x="697.5" y="463.8" font-size="7" text-anchor="end" textLength="13" lengthAdjust="spacingAndGlyphs" fill="#e4e4e5">1.50</text>
</svg></body></html>
